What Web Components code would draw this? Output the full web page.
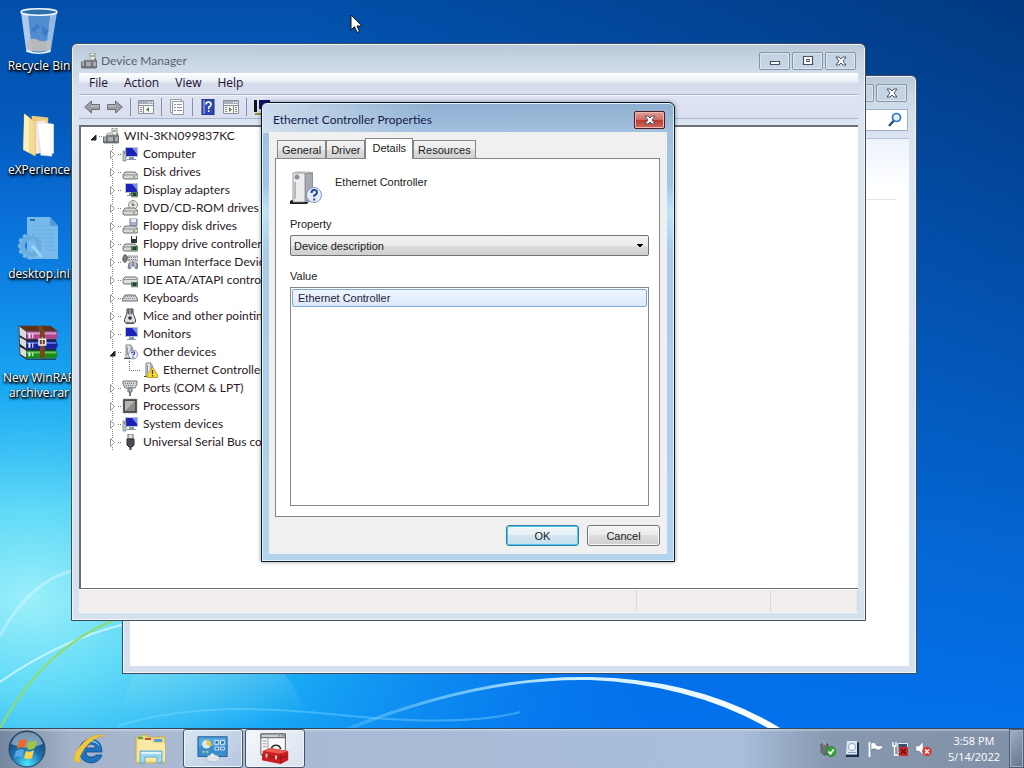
<!DOCTYPE html>
<html lang="en">
<head>
<meta charset="utf-8">
<title>Device Manager</title>
<style>
  html, body {
    height: 100%;
    margin: 0;
  }

  body {
    overflow: hidden;
    font: 12px/16px "Open Sans", "Noto Sans", sans-serif;
    color: #1a1420;
    background: #0a6be0;
  }
</style>
</head>
<body>
<desktop-shell></desktop-shell>

<script>
const MONITOR = `
  <path d="M3 1h13v10H3z" fill="#b9c4d2"/><path d="M4 2h11v8H4z" fill="#1a22b8"/>
  <path d="M10 2h5v6z" fill="#7d8cf0"/><path d="M7 11h5v2h2v1H5v-1h2z" fill="#8b97a5"/>`;
const DRIVE = `
  <path d="M3 8h10l3 3v3l-1 1H2l-1-1v-3z" fill="#d7d9d7" stroke="#6e7270"/>
  <path d="M1.500 11h14" stroke="#8b8f8d"/><path d="M11 13h2" stroke="#3a8a46"/>`;
const CHIP = `
  <path d="M9 10h7v5H9z" fill="#4d7d5c"/><path d="M11 11h3v3h-3z" fill="#23402d"/>
  <path d="M9 15h7" stroke="#9fb8a5"/>`;
const TOWER = `
  <path d="M4 1h5v13H4z" fill="#e4e6e8" stroke="#7d8288"/><path d="M9 2l2 1v11H9z" fill="#9ca2a8"/>
  <path d="M2 14h10v1H2z" fill="#44484c"/><path d="M5.500 3v8" stroke="#8d9298"/>`;
const PC = `
  <path d="M5 5h9l2 4v5l-1 1H1l-1-1V9h3z" fill="#7b8084" stroke="#4a4e52" stroke-width=".7"/>
  <path d="M9 0h5v7H9z" fill="#eef2ea" stroke="#777" stroke-width=".8"/><path d="M10 2h3v2h-3z" fill="#8fb28c"/>
  <path d="M2 7l3-3h4v3z" fill="#c6c9cb"/><path d="M1 10h14M1 12h14" stroke="#d6d8da"/>
  <path d="M4 9v5M11 9v5" stroke="#3d4144"/>`;
const PANE = `
  <path d="M.500 1.500h15v13H.500z" fill="#f4f6f4" stroke="#8b9099"/><path d="M1 2h14v3H1z" fill="#a9afb9"/>
  <path d="M10 3.500h1m1 0h1m1 0h1" stroke="#fff"/><path d="M.500 6.500h15" stroke="#8b9099"/>`;

// viewBox and markup of every glyph
const ICONS = {
  pc: ['0 0 16 16', PC],
  computer: ['0 0 16 16', MONITOR + '<path d="M1 5h3v10H1z" fill="#c5cad0" stroke="#6f767e" stroke-width=".7"/><path d="M2 7h1" stroke="#444"/>'],
  disk: ['0 0 16 16', DRIVE],
  display: ['0 0 16 16', MONITOR + CHIP],
  dvd: ['0 0 16 16', '<circle cx="11" cy="5" r="4.500" fill="#e8e9e6" stroke="#8d8f8a"/><path d="M11 1l1 3 3 1-4 1-3-2z" fill="#b9c2a5"/><circle cx="11" cy="5" r="1.300" fill="#777"/>' + DRIVE],
  floppy: ['0 0 16 16', '<path d="M8 1h7v7H8z" fill="#a9b2c6" stroke="#7a83a0"/><path d="M9 1h5v3H9z" fill="#e9edf4"/>' + DRIVE],
  floppyctl: ['0 0 16 16', '<path d="M9 0h6v7H9z" fill="#33363a"/><path d="M10 0h4v3h-4z" fill="#f0f0f0"/>' + DRIVE + CHIP],
  hid: ['0 0 16 16', '<path d="M6 2h10v5H6z" fill="#d8dade" stroke="#888" stroke-width=".8"/><path d="M7 3.500h8M7 5.500h8" stroke="#888" stroke-dasharray="1 1"/><path d="M2 1c3-1 4 2 3 5s-3 3-4 1 0-4 1-6z" fill="#77797c" stroke="#444" stroke-width=".6"/><path d="M7 9q4-2 8 0l1 5-2 1-2-3H10l-2 3-2-1z" fill="#8a94a5" stroke="#59616e" stroke-width=".7"/><path d="M9 8v5M13 8v5" stroke="#e4e7ec"/>'],
  ide: ['0 0 16 16', '<path d="M3 5h11l2 2v4l-1 1H2l-1-1V7z" fill="#dddfdd" stroke="#6e7270"/><path d="M1.500 7.500h14" stroke="#999"/>' + CHIP],
  keyboard: ['0 0 16 16', '<path d="M3 5h10l3 5v1H0v-1z" fill="#d3d5d8" stroke="#66696d"/><path d="M3 6.500h10M2 8.500h12" stroke="#8b8e92" stroke-dasharray="1 1"/>'],
  mouse: ['0 0 16 16', '<path d="M5 1h6v3q0 2 1.500 5t1 5l-2 1.500h-7L2.500 14q-.500-2 1-5T5 4z" fill="#dfe0e1" stroke="#3f4143"/><path d="M5.500 1.500v4l2 1.500v-6zM10.500 1.500v4l-2 1.500v-6z" fill="#5a5c5e"/><circle cx="8" cy="10" r="1.800" fill="#2f3133"/><path d="M4 14q4 2 8 0" stroke="#6a6c6e" fill="none"/>'],
  monitor: ['0 0 16 16', MONITOR],
  other: ['0 0 16 16', TOWER + '<circle cx="11" cy="10.500" r="4.500" fill="#eef2fb" stroke="#7f8db0"/><path d="M9.500 9.500q0-1.700 1.600-1.700t1.500 1.500q0 1-1.500 1.700v.6M11 12.500v1.200" fill="none" stroke="#2c4190" stroke-width="1.200"/>'],
  warning: ['0 0 16 16', TOWER + '<path d="M10.500 5l5.500 8.500v2H5v-2z" fill="#f7dc2c" stroke="#a8931c" stroke-width=".8"/><path d="M10.500 8v4M10.500 13v1.500" stroke="#4a4000" stroke-width="1.300"/>'],
  port: ['0 0 16 16', '<path d="M1 1h14v3l-2 4H3L1 4z" fill="#cfd1d2" stroke="#76797b"/><path d="M3 3.500h10M4 5.500h8" stroke="#76797b" stroke-dasharray="1 1"/><path d="M6 8h4v4H6z" fill="#a9acae" stroke="#76797b"/><path d="M8 12v4" stroke="#76797b" stroke-width="2"/>'],
  cpu: ['0 0 16 16', '<path d="M1 1h14v14H1z" fill="#4c4e4c" stroke="#8d8f8d" stroke-dasharray="1 1"/><path d="M3 3h10v10H3z" fill="#8b8d8b"/><path d="M3 3h10L3 13z" fill="#b4b6b4"/>'],
  usb: ['0 0 16 16', '<path d="M6 0h5v5H6z" fill="#e2e3e4" stroke="#66696b"/><path d="M5 5h7v6l-2 2H7l-2-2z" fill="#4a4c4e" stroke="#2d2f31"/><path d="M8.500 13v3" stroke="#444" stroke-width="2"/>'],

  back: ['0 0 16 16', '<path d="M.700 8l6.800-6v3.500h8v5h-8V14z" fill="#9c9ea3" stroke="#6c6e75"/><path d="M7 7h8" stroke="#c9cbd0"/>'],
  forward: ['0 0 16 16', '<path d="M15.300 8L8.500 2v3.500h-8v5h8V14z" fill="#9c9ea3" stroke="#6c6e75"/><path d="M1 7h8" stroke="#c9cbd0"/>'],
  hidetree: ['0 0 16 16', PANE + '<path d="M5.500 7v7" stroke="#8b9099"/><path d="M2 8.500h2M2 10.500h2M2 12.500h2" stroke="#888"/><path d="M11 8v5L8 10.500z" fill="#4d8b52"/>'],
  props: ['0 0 16 16', '<path d="M1.500.500h11v13h-11z" fill="#f2f3f5" stroke="#989ca6"/><path d="M3.500 2.500h11v13h-11z" fill="#fafafa" stroke="#989ca6"/><path d="M5 5.500h2m1 0h5M5 8.500h2m1 0h5M5 11.500h2m1 0h5" stroke="#8d93a5"/>'],
  help: ['0 0 16 16', '<path d="M2 0h12v16H2z" fill="#2f49ad" stroke="#1d2f7d"/><path d="M3 1h2v14H3z" fill="#6c85d8"/><path d="M6 5.500q0-2.500 2.500-2.500T11 5.500q0 1.500-2.300 2.800V10M8.700 11.300V13" fill="none" stroke="#fff" stroke-width="1.600"/>'],
  showpane: ['0 0 16 16', PANE + '<path d="M10.500 7v7" stroke="#8b9099"/><path d="M2 8.500h2M12 8.500h2M12 10.500h2M2 10.500h2M12 12.500h2M2 12.500h2" stroke="#888"/><path d="M6 8v5l3-2.500z" fill="#4d8b52"/>'],
  scan: ['0 0 16 16', '<path d="M0 1h3v12H0z" fill="#111"/><path d="M5 1h11v9H5z" fill="#10106e"/><path d="M1 14h9v2H1z" fill="#8e8c3a"/>'],

  device: ['0 0 32 34', `
    <path d="M0 31l4-2h17l-4 5H0z" fill="#1c1e20"/><path d="M3 3l4-2h12l4 2v27l-6 2H3z" fill="#d9dbde"/>
    <path d="M3 3h12v29H3z" fill="#ecedee" stroke="#85898e" stroke-width=".8"/><path d="M15 3l8-1v28l-8 2z" fill="#8f9399"/>
    <path d="M17 4v26M19 4v26M21 4v25" stroke="#bfc3c8"/><circle cx="7" cy="7" r="2.500" fill="#8d9196"/><path d="M5 12v17" stroke="#b6babe" stroke-width="2"/>
    <circle cx="24" cy="25" r="7.500" fill="#e4ecfa" stroke="#8596b8"/>
    <path d="M21.500 23q0-3 2.800-3t2.700 2.600q0 1.700-2.800 2.900v1.300M24.200 28.500v2" fill="none" stroke="#2746a0" stroke-width="2"/>`],

  recycle: ['0 0 38 46', `
    <path d="M1 4l5 37q13 7 25 0L37 4z" fill="#86b4e4" opacity=".6"/>
    <path d="M1 4l5 37q3 2 6 2.500L8 6z" fill="#e8f4ff" opacity=".6"/><path d="M30 8l-4 35 5-2 6-37z" fill="#d5e8fb" opacity=".5"/>
    <path d="M7 33q6-4 11-1t13-1l-1 10q-11 5-23 0z" fill="#c5beb8" opacity=".85"/>
    <path d="M6 41q13 7 25 0l-.500 3q-12 4-24 0z" fill="#e9f0f7"/>
    <path d="M11 22l6-7 4 6-4-1-2 5zM22 18l7 4-4 7-3-5z" fill="#2f6fc4" opacity=".6"/>
    <ellipse cx="19" cy="4" rx="18" ry="3.200" fill="#2f6fae" stroke="#eef6ff" stroke-width="1.500"/>`],
  folder: ['0 0 38 50', `
    <path d="M11 4l18 2v36L13 46z" fill="#e9cd7c"/><path d="M12 11l14-2v35l-14 2z" fill="#f7e9e0"/>
    <path d="M17 12l16 1v35l-12-1z" fill="#fdfdfd" stroke="#cfd3da" stroke-width=".6"/>
    <path d="M21 12l14 1v32H22z" fill="#fff"/><path d="M3 2l12 9v37L2 41z" fill="#f3dd93" stroke="#cda84c" stroke-width=".6"/><path d="M3 2l5 4v38l-6-3z" fill="#fbf0bd"/>`],
  ini: ['0 0 42 46', `
    <path d="M9 1h23l8 9v33H9z" fill="#8cc6f0" opacity=".85"/><path d="M32 1v9h8z" fill="#4f9bd8"/>
    <path d="M12 4h5" stroke="#2b6cae" stroke-width="2"/><path d="M13 10h18M13 14h23M13 18h23M19 22h17M24 26h12M27 30h9M28 34h8" stroke="#68aee0"/>
    <circle cx="13" cy="30" r="9" fill="none" stroke="#6aaee0" stroke-width="6"/><circle cx="13" cy="30" r="12" fill="none" stroke="#7cbae6" stroke-width="3" stroke-dasharray="3 3"/>
    <path d="M14 30q6 5 9 11" stroke="#9fd2f5" stroke-width="3" fill="none"/>`],
  rar: ['0 0 44 38', `
    <path d="M1 1l8 6v28l-7-4z" fill="#dcdcdc" stroke="#444"/><path d="M1 1h33l8 6H9z" fill="#5d3218"/><path d="M9 7h31q3 4 0 8H9z" fill="#b2458e"/><path d="M9 8h31v2H9z" fill="#e0a0cc"/>
    <path d="M2 11l7 4h31v2H9l-7-4zM2 20l7 5h31v2H9l-7-4z" fill="#222"/><path d="M9 17h31q3 4 0 8H9z" fill="#16229c"/><path d="M9 18h31v2H9z" fill="#5a6ee0"/>
    <path d="M9 27h31q3 4 0 8H9z" fill="#1d8a1c"/><path d="M9 28h31v2H9z" fill="#62c852"/><path d="M2 31l7 5h31" fill="none" stroke="#222"/>
    <path d="M11 9h2v5h-2zm4 0h1v5h-1zM11 19h2v5h-2zm4 0h1v5h-1zM11 29h2v4h-2zm4 0h1v4h-1z" fill="#fff"/>
    <path d="M20 1h5l3 6v28h-5V8z" fill="#7a4422"/><path d="M22 15h7v6h-7z" fill="none" stroke="#eee" stroke-width="1.600"/><path d="M25.500 13v9" stroke="#ddd"/>`],

  start: ['0 0 38 38', `
    <defs><radialGradient id="orb" cx=".5" cy=".9" r=".9"><stop offset="0" stop-color="#4fe4ff"/><stop offset=".45" stop-color="#1c74b0"/><stop offset="1" stop-color="#12365f"/></radialGradient></defs>
    <circle cx="19" cy="19" r="18" fill="url(#orb)" stroke="#27405e"/><path d="M3 14Q7 2 19 2t16 12q-16 7-32 0z" fill="#dfeaf5" opacity=".5"/>
    <path d="M11 11q4-3 8-1l-2 8q-4-2-8 1z" fill="#ee6a2c"/><path d="M21 11q4 2 8-1l-2 8q-4 3-8 1z" fill="#9cc93c"/>
    <path d="M8 21q4-3 8-1l-2 7q-4-2-8 1z" fill="#58a8e8"/><path d="M18 21q4 2 8-1l-2 8q-4 2-8 0z" fill="#fbd24a"/>`],
  ie: ['0 0 32 32', `
    <path d="M29 19H13q0 5 5 5 4 0 5-2h6q-3 8-11 8Q7 29 6 18 7 7 18 6q11 1 11 13zM13 15h10q-1-4-5-4t-5 4z" fill="#1f72bd" stroke="#0f4c8c" stroke-width=".8"/>
    <path d="M8 14Q12 7 18 7q7 1 9 7-4-5-9-5-6 0-10 5z" fill="#7cc8f4"/>
    <path d="M30 4Q26 2 19 8 10 15 7 24q-1 4 1 5-7 2-7-4 1-7 9-15T26 2q5-1 4 2z" fill="#f2c53c" stroke="#cf9a1f" stroke-width=".4"/>`],
  explorer: ['0 0 32 32', `
    <path d="M1 4h5l1-2h5l1 2h17v26H1z" fill="#eed57e" stroke="#c9a640" stroke-width=".7"/><path d="M3 4h5v2H3z" fill="#58a83d"/><path d="M10 5h6v3h-6z" fill="#c84c32"/><path d="M19 6h8v3h-8z" fill="#5aa0d8"/>
    <path d="M3 7h13l2 3h12v18H2z" fill="#fae9a4"/><path d="M5 18h22v12h-5v-6H10v6H5z" fill="#9cd8f3" stroke="#4b9cc8" stroke-width=".8"/><path d="M6 19h20v2H6z" fill="#dff4fd"/>`],
  cpanel: ['0 0 34 30', `
    <path d="M1 2h31v21H1z" fill="#3b8ccb" stroke="#1c5c96"/><path d="M2 3h29v9H2z" fill="#5aa7df"/>
    <circle cx="10" cy="10" r="4.500" fill="#dbe9f5"/><path d="M10 10V5a5 5 0 0 1 4 8z" fill="#f2c33c"/>
    <path d="M19 6h4v4h-4zM25 6h4v4h-4zM19 13h4v3h-4zM25 13h4v3h-4z" fill="#2a72b0" stroke="#e8f3fb"/>
    <path d="M6 18h2m2 0h2" stroke="#bfe28a" stroke-width="2"/><ellipse cx="17" cy="25" rx="7" ry="4" fill="#dfe3e8" stroke="#9aa2ac" stroke-width=".6"/><path d="M16 19l4 4h-7z" fill="#e9edf2"/>`],
  toolbox: ['0 0 32 34', `
    <path d="M1 1h26v22H1z" fill="#fafafa" stroke="#55585c"/><path d="M1 1h26v4H1z" fill="#c8ccd2" stroke="#55585c"/><path d="M20 3h1m2 0h1m1 0h1" stroke="#333"/>
    <path d="M3 8.500h4M3 11.500h4M3 14.500h4" stroke="#8590a0"/><path d="M8.500 5v15" stroke="#999"/>
    <path d="M12 17q1-4 5-4t5 4" fill="none" stroke="#39322f" stroke-width="1.800"/>
    <path d="M3 19l8-3 19 3v10l-8 4-20-4z" fill="#c81e22"/><path d="M3 19l8-3 19 3-8 3z" fill="#ec5a56"/><path d="M2 24l20 3 8-3" fill="none" stroke="#8d0f14"/><path d="M22 22v11" stroke="#9c1318"/><path d="M6 22h2v4H6zM16 24h2v4h-2z" fill="#f0d6c8"/>`],

  safe: ['0 0 16 16', '<path d="M1 3h7v8l-2 3H4L1 11z" fill="#6d7378" stroke="#44494e" stroke-width=".7"/><path d="M3 0h3v4H3z" fill="#9da3a8"/><circle cx="11" cy="10.500" r="5" fill="#37a336" stroke="#1d6f1d" stroke-width=".6"/><path d="M8.500 10.500l2 2.300 3.300-4.500" fill="none" stroke="#fff" stroke-width="1.700"/>'],
  disc: ['0 0 16 16', '<path d="M3 0h10v13H2z" fill="#dbe6f1"/><path d="M13 1l2 1v14H2v-2h11z" fill="#1d2c4c"/><circle cx="8" cy="6" r="3.600" fill="#f2f7fb" stroke="#8fa6bd"/><path d="M4 11.500h8" stroke="#90a2b4"/>'],
  flag: ['0 0 16 16', '<path d="M1.500 1v15" stroke="#fff" stroke-width="1.800"/><path d="M3 2q3-1 5 .5V4q3 1.500 7 .5-1 5-7 4.500V8Q5 7 3 9z" fill="#fff" stroke="#40505f" stroke-width=".4"/>'],
  network: ['0 0 16 16', '<path d="M1 1v4h3V1M2.500 5v9H6" fill="none" stroke="#fff" stroke-width="1.300"/><path d="M6 2.500h9.500v9H6z" fill="#39506e" stroke="#e6edf4"/><path d="M6 14.500h7" stroke="#e6edf4"/><path d="M7 6h9v9H7z" fill="#c92a2c"/><path d="M9 8l5 5M14 8l-5 5" stroke="#5e1012" stroke-width="1.500"/>'],
  volume: ['0 0 16 16', '<path d="M0 5h3l4-4v13l-4-4H0z" fill="#fff" stroke="#5b6b7a" stroke-width=".4"/><circle cx="11" cy="10.500" r="4.700" fill="#d83a34"/><path d="M9 8.500l4 4M13 8.500l-4 4" stroke="#fff" stroke-width="1.500"/>'],

  min: ['0 0 12 12', '<path d="M1.500 6.500h9v3h-9z" fill="#fff" stroke="#46536a" stroke-width="1.200"/>'],
  max: ['0 0 12 12', '<path d="M1.500 1.500h9v8h-9z" fill="#fff" stroke="#46536a" stroke-width="1.200"/><path d="M4.500 4.500h3v2h-3z" fill="none" stroke="#46536a"/>'],
  close: ['0 0 12 12', '<path d="M1 2h3l2 2 2-2h3L8 6l3 4H8L6 8l-2 2H1l3-4z" fill="#fff" stroke="#46536a"/>'],
  search: ['0 0 16 16', '<circle cx="9.500" cy="5.500" r="4" fill="#e4f1fb" stroke="#2b74c4" stroke-width="1.700"/><path d="M6.500 9L2 14" stroke="#244a80" stroke-width="2.200"/>'],
  cursor: ['0 0 13 20', '<path d="M1 1v15l3.500-3.300L7 18.500l2.500-1L7 12h5z" fill="#fff" stroke="#111"/>']
};

class UiIcon extends HTMLElement {
  static get observedAttributes() {
    return ['name'];
  }

  constructor() {
    super();
    this.attachShadow({ mode: 'open' });
  }

  attributeChangedCallback(name, oldValue, newValue) {
    const [box, markup] = ICONS[newValue];
    this.shadowRoot.innerHTML = `
      <style>
        :host { display: block; flex: none; width: 16px; height: 16px; }
        svg { display: block; width: 100%; height: 100%; }
      </style>
      <svg viewBox="${box}" aria-hidden="true">${markup}</svg>
    `;
  }
}

class DesktopWallpaper extends HTMLElement {
  constructor() {
    super();
    this.attachShadow({ mode: 'open' });
    this.shadowRoot.innerHTML = `
      <style>
        :host { display: block; }
        svg { display: block; width: 100%; height: 100%; }
      </style>
      <svg viewBox="0 0 1024 728" preserveAspectRatio="none" aria-hidden="true">
        <defs>
          <linearGradient id="base" x1="0" y1="0" x2="0" y2="1">
            <stop offset="0" stop-color="#0350aa"/><stop offset=".3" stop-color="#0561cb"/>
            <stop offset=".75" stop-color="#0672e8"/><stop offset="1" stop-color="#0474f0"/>
          </linearGradient>
          <linearGradient id="shade" x1="0" y1="0" x2="1" y2="0">
            <stop offset=".3" stop-color="#00265f" stop-opacity="0"/><stop offset="1" stop-color="#00265f" stop-opacity=".55"/>
          </linearGradient>
          <linearGradient id="fade" x1="0" y1="0" x2="0" y2="1">
            <stop offset="0" stop-color="#fff"/><stop offset=".7" stop-color="#555"/><stop offset="1" stop-color="#111"/>
          </linearGradient>
          <mask id="top"><rect width="1024" height="728" fill="url(#fade)"/></mask>
          <radialGradient id="glow" gradientUnits="userSpaceOnUse" cx="0" cy="0" r="1" gradientTransform="translate(30 600) scale(640 480)">
            <stop offset="0" stop-color="#9ceffa"/><stop offset=".18" stop-color="#62dbf7"/>
            <stop offset=".45" stop-color="#1cb2f6" stop-opacity=".85"/><stop offset="1" stop-color="#0a80f0" stop-opacity="0"/>
          </radialGradient>
          <linearGradient id="arc" x1="0" y1="0" x2="1" y2="0">
            <stop offset="0" stop-color="#8fdcff" stop-opacity=".2"/><stop offset=".5" stop-color="#c9efff"/><stop offset="1" stop-color="#fff"/>
          </linearGradient>
          <radialGradient id="bubble" cx=".5" cy="0" r="1">
            <stop offset="0" stop-color="#d5f7e8" stop-opacity=".4"/><stop offset="1" stop-color="#d5f7e8" stop-opacity="0"/>
          </radialGradient>
        </defs>
        <rect width="1024" height="728" fill="url(#base)"/>
        <rect width="1024" height="728" fill="url(#shade)" mask="url(#top)"/>
        <rect width="1024" height="728" fill="url(#glow)"/>
        <path d="M115 728Q150 600 210 620 290 650 310 728z" fill="url(#bubble)"/>
        <g fill="none">
          <path d="M0 636Q30 580 75 570" stroke="#e3fbff" stroke-width="3" opacity=".4"/>
          <path d="M0 682Q60 640 125 624" stroke="#e3fbff" stroke-width="2" opacity=".7"/>
          <path d="M0 728Q45 645 120 618" stroke="#8fdc6c" stroke-width="2"/>
          <path d="M118 726Q200 700 330 714T520 712" stroke="#7fdcff" stroke-width="2" opacity=".4"/>
        </g>
        <path d="M345 728Q480 675 590 677 700 679 780 728h-12Q690 684 590 680 480 678 355 728z" fill="url(#arc)"/>
      </svg>
    `;
  }
}

class DesktopIcon extends HTMLElement {
  constructor() {
    super();
    this.attachShadow({ mode: 'open' });
    this.shadowRoot.innerHTML = `
      <style>
        :host { display: block; height: 104px; }
        button {
          display: flex;
          flex-direction: column;
          align-items: center;
          gap: 4px;
          width: 100%;
          padding: 0;
          border: 0;
          background: none;
          font: 12px/15px "Open Sans", "Noto Sans", sans-serif;
          color: #fff;
          text-shadow: 0 1px 2px #000, 1px 1px 2px #000, 1px 2px 3px #000;
        }
        ui-icon { width: 42px; height: 46px; }
      </style>
      <button type="button"><ui-icon></ui-icon><span><slot></slot></span></button>
    `;
  }

  connectedCallback() {
    this.shadowRoot.querySelector('ui-icon').setAttribute('name', this.getAttribute('icon'));
  }
}

class AeroWindow extends HTMLElement {
  constructor() {
    super();
    this.attachShadow({ mode: 'open' });
    this.shadowRoot.innerHTML = `
      <style>
        :host {
          display: flex;
          flex-direction: column;
          box-sizing: border-box;
          padding: 0 7px 7px;
          border: 1px solid #3f4a5c;
          border-radius: 6px 6px 0 0;
          background: linear-gradient(#b9c7d6, #cbd8e6 20px, #dbe5f1 60px, #d6e1ee);
          box-shadow: inset 0 0 0 1px #eef4fa;
        }
        :host([active]) {
          border-color: #0c1a26;
          background: linear-gradient(100deg, #ffffff88, #ffffff00 40%) 0 0 / 100% 30px no-repeat,
            linear-gradient(#8fafd0, #a3c1e0 30px, #a0c6e6 80px, #bfe4f8 110px, #a9cbe6 150px, #b3d4ec);
          box-shadow: inset 0 0 0 1px #e0f2fc, 0 0 4px #0006;
        }
        header {
          display: flex;
          align-items: center;
          gap: 4px;
          height: 24px;
          padding: 5px 2px 0;
          color: #5a6472;
          font-family: Lato, "Open Sans", sans-serif;
        }
        :host([active]) header { padding-left: 4px; color: #14204c; }
        h1 { flex: 1; margin: 0; font: inherit; }
        .controls { display: flex; gap: 2px; }
        .controls button {
          display: flex;
          align-items: center;
          justify-content: center;
          width: 31px;
          height: 18px;
          padding: 0;
          border: 1px solid #8594a9;
          border-radius: 2px;
          background: #c6d3e2;
          box-shadow: inset 0 0 0 1px #dde7f1;
        }
        .controls ui-icon { width: 12px; height: 12px; }
        :host([active]) .controls button {
          border-color: #4b1c22;
          background: linear-gradient(#e2a39b, #cf6a5e 50%, #b93a2e 50%, #d0685a);
          box-shadow: inset 0 0 0 1px #eeb9b2;
        }
        main { display: flex; flex: 1; flex-direction: column; min-height: 0; }
      </style>
      <header>
        <slot name="icon"></slot>
        <h1></h1>
        <div class="controls"></div>
      </header>
      <main><slot></slot></main>
    `;
  }

  connectedCallback() {
    this.shadowRoot.querySelector('h1').textContent = this.getAttribute('heading');
    const labels = { min: 'Minimize', max: 'Maximize', close: 'Close' };
    this.shadowRoot.querySelector('.controls').innerHTML = this.getAttribute('controls').split(' ')
      .map((name) => `<button type="button" aria-label="${labels[name]}"><ui-icon name="${name}"></ui-icon></button>`)
      .join('');
  }
}

class MenuBar extends HTMLElement {
  constructor() {
    super();
    this.attachShadow({ mode: 'open' });
    this.shadowRoot.innerHTML = `
      <style>
        :host {
          display: flex;
          padding: 0 2px;
          border-bottom: 1px solid #aab4ca;
          background: linear-gradient(#fff, #e9edf7 9px, #d4daea 10px, #d9e0ee);
        }
        button {
          padding: 2px 8px 3px;
          border: 0;
          background: none;
          font: inherit;
          color: #1d1030;
        }
      </style>
      <button type="button">File</button>
      <button type="button">Action</button>
      <button type="button">View</button>
      <button type="button">Help</button>
    `;
  }
}

class ToolBar extends HTMLElement {
  constructor() {
    super();
    this.attachShadow({ mode: 'open' });
    const items = [
      ['back', 'Back'], ['forward', 'Forward'], null,
      ['hidetree', 'Show/Hide Console Tree'], null,
      ['props', 'Properties'], null,
      ['help', 'Help'], ['showpane', 'Show/Hide Action Pane'], null,
      ['scan', 'Scan for hardware changes']
    ];
    this.shadowRoot.innerHTML = `
      <style>
        :host {
          display: flex;
          align-items: center;
          gap: 7px;
          height: 22px;
          padding: 0 5px;
          border-top: 1px solid #f6f8fc;
          border-bottom: 1px solid #a8b6d0;
          background: linear-gradient(#dfe4f3, #d9def0);
        }
        button { padding: 0; border: 0; background: none; }
        hr { width: 1px; height: 18px; margin: 0; border: 0; background: #8490a8; }
      </style>
      ${items.map((item) => item
        ? `<button type="button" aria-label="${item[1]}"><ui-icon name="${item[0]}"></ui-icon></button>`
        : '<hr>').join('')}
    `;
  }
}

class TreeRow extends HTMLElement {
  constructor() {
    super();
    this.attachShadow({ mode: 'open' });
    this.shadowRoot.innerHTML = `
      <style>
        :host {
          display: flex;
          align-items: center;
          height: 18px;
          padding-left: 27px;
          white-space: nowrap;
        }
        :host([level="0"]) { padding-left: 8px; }
        :host([level="2"]) { padding-left: 45px; }
        button {
          display: flex;
          width: 9px;
          padding: 0;
          border: 0;
          background: #fff;
        }
        svg { display: block; width: 9px; height: 9px; }
        .open, :host([open]) .closed { display: none; }
        :host([open]) .open { display: block; }
        i { width: 3px; margin: 0 1px; border-top: 1px dotted #777; }
        :host([level="2"]) button { display: none; }
        :host([level="2"]) i { width: 10px; height: 9px; margin: 0 2px 9px 3px; border: 1px dotted #777; border-width: 0 0 1px 1px; }
        span { padding: 0 0 1px 5px; }
      </style>
      <button type="button" aria-label="Toggle">
        <svg class="closed" viewBox="0 0 9 9"><path d="M2.500.500v8l4-4z" fill="#fff" stroke="#9a9a9a"/></svg>
        <svg class="open" viewBox="0 0 9 9"><path d="M7 3v5H2z" fill="#262626" stroke="#262626"/></svg>
      </button>
      <i></i>
      <ui-icon></ui-icon>
      <span><slot></slot></span>
    `;
  }

  connectedCallback() {
    this.shadowRoot.querySelector('ui-icon').setAttribute('name', this.getAttribute('icon'));
  }
}

class DeviceTree extends HTMLElement {
  constructor() {
    super();
    this.attachShadow({ mode: 'open' });
    const devices = [
      [0, 'pc', 'WIN-3KN099837KC', true],
      [1, 'computer', 'Computer'],
      [1, 'disk', 'Disk drives'],
      [1, 'display', 'Display adapters'],
      [1, 'dvd', 'DVD/CD-ROM drives'],
      [1, 'floppy', 'Floppy disk drives'],
      [1, 'floppyctl', 'Floppy drive controllers'],
      [1, 'hid', 'Human Interface Devices'],
      [1, 'ide', 'IDE ATA/ATAPI controllers'],
      [1, 'keyboard', 'Keyboards'],
      [1, 'mouse', 'Mice and other pointing devices'],
      [1, 'monitor', 'Monitors'],
      [1, 'other', 'Other devices', true],
      [2, 'warning', 'Ethernet Controller'],
      [1, 'port', 'Ports (COM &amp; LPT)'],
      [1, 'cpu', 'Processors'],
      [1, 'computer', 'System devices'],
      [1, 'usb', 'Universal Serial Bus controllers']
    ];
    this.shadowRoot.innerHTML = `
      <style>
        :host {
          display: block;
          flex: 1;
          min-height: 0;
          margin-top: 6px;
          overflow: hidden;
          border: solid #6c6f76;
          border-width: 2px 0 1px 2px;
          background: #fff;
          color: #2b1828;
          font-family: Lato, "Open Sans", sans-serif;
        }
        .children {
          background: repeating-linear-gradient(#888 0 1px, #fff 1px 2px) 31px 0 / 1px 100% no-repeat;
        }
      </style>
      <div role="tree">
        ${this.row(devices[0])}
        <div class="children" role="group">${devices.slice(1).map(this.row).join('')}</div>
      </div>
    `;
  }

  row([level, icon, label, open]) {
    return `<tree-row role="treeitem" level="${level}" icon="${icon}"${open ? ' open' : ''}>${label}</tree-row>`;
  }
}

class StatusBar extends HTMLElement {
  constructor() {
    super();
    this.attachShadow({ mode: 'open' });
    this.shadowRoot.innerHTML = `
      <style>
        :host { display: flex; height: 22px; border-top: 1px solid #fff; border-bottom: 1px solid #fafafa; background: #f1eded; }
        div { flex: 133; border-right: 1px solid #dcd8d8; }
        div:first-of-type { flex: 558; }
        div:last-of-type { flex: 86; }
      </style>
      <div></div><div></div><div></div>
    `;
  }
}

class ExplorerView extends HTMLElement {
  constructor() {
    super();
    this.attachShadow({ mode: 'open' });
    this.shadowRoot.innerHTML = `
      <style>
        :host { display: flex; flex: 1; flex-direction: column; }
        .search {
          display: flex;
          align-items: center;
          align-self: flex-end;
          width: 200px;
          height: 20px;
          margin: 4px 1px 7px;
          padding-right: 4px;
          border: 1px solid #9fb0c6;
          background: #fff;
        }
        input { flex: 1; min-width: 0; border: 0; background: none; }
        .view { flex: 1; border-top: 1px solid #b5c4d6; background: linear-gradient(#edf3fc, #fff 50px); }
        hr { margin: 60px 13px 0; border: 0; border-top: 1px solid #e4e6ea; }
      </style>
      <label class="search"><input type="search" aria-label="Search"><ui-icon name="search"></ui-icon></label>
      <div class="view"><hr></div>
    `;
  }
}

class DeviceProperties extends HTMLElement {
  constructor() {
    super();
    this.attachShadow({ mode: 'open' });
    this.shadowRoot.innerHTML = `
      <style>
        :host {
          display: flex;
          flex: 1;
          flex-direction: column;
          padding: 6px 7px 8px 6px;
          background: #f0f0f0;
          font: 11px/14px "Liberation Sans", Arial, sans-serif;
          color: #222;
        }
        button, select { font: inherit; color: inherit; }
        nav { display: flex; align-items: flex-end; padding-left: 2px; }
        nav button {
          height: 18px;
          padding: 0 4px;
          border: 1px solid #84868a;
          border-bottom: 0;
          background: linear-gradient(#f2f2f2, #ebebeb 50%, #dddddd 50%, #d2d2d2);
        }
        nav button[aria-selected="true"] {
          z-index: 1;
          height: 21px;
          margin-bottom: -1px;
          padding: 0 6px 2px;
          background: #fff;
        }
        .panel {
          display: flex;
          flex: 1;
          flex-direction: column;
          gap: 4px;
          padding: 11px 10px 10px 14px;
          border: 1px solid #84868a;
          background: #fff;
        }
        .device { display: flex; gap: 13px; margin-bottom: 9px; }
        .device ui-icon { width: 32px; height: 34px; }
        .device span { padding-top: 5px; }
        select {
          appearance: none;
          height: 21px;
          margin-bottom: 9px;
          padding: 0 3px;
          border: 1px solid #6f7173;
          border-radius: 2px;
          background:
            linear-gradient(to bottom right, #000 50%, #0000 50%) right 4px center / 4px 4px no-repeat,
            linear-gradient(to bottom left, #000 50%, #0000 50%) right 8px center / 4px 4px no-repeat,
            linear-gradient(#f2f2f2, #ebebeb 50%, #dcdcdc 50%, #cfcfcf);
        }
        ul { flex: 1; margin: 0; padding: 1px; border: 1px solid #84868a; list-style: none; }
        li {
          padding: 1px 5px;
          border: 1px solid #7fa8d8;
          border-radius: 2px;
          background: linear-gradient(#f0f6fe, #dbe8fb);
          color: #1b2440;
        }
        footer { display: flex; justify-content: flex-end; gap: 8px; padding-top: 8px; }
        footer button {
          width: 73px;
          height: 21px;
          padding: 0;
          border: 1px solid #707275;
          border-radius: 3px;
          background: linear-gradient(#f4f4f4, #ebebeb 50%, #dddddd 50%, #cfcfcf);
          box-shadow: inset 0 0 0 1px #fbfbfb;
        }
        footer .default {
          border-color: #2f7f9e;
          background: linear-gradient(#f1f7fa, #e5f0f6 50%, #d3e5f0 50%, #c6e0ee);
          box-shadow: inset 0 0 0 1px #4cc8ee;
        }
      </style>
      <nav role="tablist">
        <button type="button" role="tab">General</button>
        <button type="button" role="tab">Driver</button>
        <button type="button" role="tab" aria-selected="true">Details</button>
        <button type="button" role="tab">Resources</button>
      </nav>
      <div class="panel" role="tabpanel">
        <div class="device"><ui-icon name="device"></ui-icon><span>Ethernet Controller</span></div>
        <label for="property">Property</label>
        <select id="property"><option>Device description</option></select>
        <span id="value">Value</span>
        <ul role="listbox" aria-labelledby="value"><li role="option" aria-selected="true">Ethernet Controller</li></ul>
      </div>
      <footer>
        <button type="button" class="default">OK</button>
        <button type="button">Cancel</button>
      </footer>
    `;
  }
}

class TaskBar extends HTMLElement {
  constructor() {
    super();
    this.attachShadow({ mode: 'open' });
    this.shadowRoot.innerHTML = `
      <style>
        :host {
          display: flex;
          gap: 2px;
          box-sizing: border-box;
          border-top: 1px solid #33475f;
          background: linear-gradient(#fff6, #fff0 3px),
            linear-gradient(90deg, #74879f, #a5b2c8 70px, #a9bad2 180px, #a8bedb 740px, #8799b0 830px, #8090a6);
        }
        button {
          display: flex;
          align-items: center;
          justify-content: center;
          box-sizing: border-box;
          width: 60px;
          padding: 0;
          border: 0;
          background: none;
        }
        button ui-icon { width: 32px; height: 32px; }
        .start { width: 57px; padding-right: 3px; }
        .start ui-icon { width: 38px; height: 38px; }
        .running {
          border: 1px solid #43536a;
          border-radius: 3px;
          background: linear-gradient(135deg, #dbe6f3, #b4c6de);
          box-shadow: inset 0 0 0 1px #eef4fb;
        }
        .front { background: linear-gradient(135deg, #f6f8fb, #d8e1ee); }
        .tray { display: flex; align-items: center; gap: 8px; margin-left: auto; }
        .tray button { width: 16px; }
        .tray ui-icon { width: 16px; height: 16px; }
        time {
          align-self: center;
          padding: 0 7px 0 14px;
          font-size: 11px;
          text-align: center;
          color: #fff;
        }
        .peek { width: 15px; border: 1px solid #4d5e75; background: linear-gradient(135deg, #9fb0c2, #64748a); box-shadow: inset 0 0 0 1px #a3b1c2; }
      </style>
      <button type="button" class="start" aria-label="Start"><ui-icon name="start"></ui-icon></button>
      <button type="button" aria-label="Internet Explorer"><ui-icon name="ie"></ui-icon></button>
      <button type="button" aria-label="Windows Explorer"><ui-icon name="explorer"></ui-icon></button>
      <button type="button" class="running" aria-label="Control Panel"><ui-icon name="cpanel"></ui-icon></button>
      <button type="button" class="running front" aria-label="Device Manager"><ui-icon name="toolbox"></ui-icon></button>
      <div class="tray">
        <button type="button" aria-label="Safely remove hardware"><ui-icon name="safe"></ui-icon></button>
        <button type="button" aria-label="Disc"><ui-icon name="disc"></ui-icon></button>
        <button type="button" aria-label="Action Center"><ui-icon name="flag"></ui-icon></button>
        <button type="button" aria-label="Network"><ui-icon name="network"></ui-icon></button>
        <button type="button" aria-label="Volume"><ui-icon name="volume"></ui-icon></button>
      </div>
      <time datetime="2022-05-14T15:58">3:58 PM<br>5/14/2022</time>
      <button type="button" class="peek" aria-label="Show desktop"></button>
    `;
  }
}

class DesktopShell extends HTMLElement {
  constructor() {
    super();
    this.attachShadow({ mode: 'open' });
    this.shadowRoot.innerHTML = `
      <style>
        :host { display: flex; flex-direction: column; height: 100%; }
        .desktop { position: relative; flex: 1; min-height: 0; overflow: hidden; }
        desktop-wallpaper { position: absolute; inset: 0; }
        .icons { position: relative; width: 78px; padding-top: 8px; }
        aero-window { position: absolute; }
        .explorer { inset: 75px 107px 54px 122px; }
        .manager { inset: 43px 158px 107px 71px; }
        .properties { inset: 102px 349px 166px 261px; }
        .cursor { position: absolute; left: 350px; top: 14px; width: 13px; height: 20px; }
        task-bar { height: 40px; }
      </style>
      <div class="desktop">
        <desktop-wallpaper></desktop-wallpaper>
        <div class="icons">
          <desktop-icon icon="recycle">Recycle Bin</desktop-icon>
          <desktop-icon icon="folder">eXPerience</desktop-icon>
          <desktop-icon icon="ini">desktop.ini</desktop-icon>
          <desktop-icon icon="rar">New WinRAR archive.rar</desktop-icon>
        </div>
        <aero-window class="explorer" heading="" controls="min max close">
          <explorer-view></explorer-view>
        </aero-window>
        <aero-window class="manager" heading="Device Manager" controls="min max close">
          <ui-icon slot="icon" name="pc"></ui-icon>
          <menu-bar></menu-bar>
          <tool-bar></tool-bar>
          <device-tree></device-tree>
          <status-bar></status-bar>
        </aero-window>
        <aero-window class="properties" heading="Ethernet Controller Properties" controls="close" active>
          <device-properties></device-properties>
        </aero-window>
        <ui-icon class="cursor" name="cursor"></ui-icon>
      </div>
      <task-bar></task-bar>
    `;
  }
}

customElements.define('ui-icon', UiIcon);
customElements.define('desktop-wallpaper', DesktopWallpaper);
customElements.define('desktop-icon', DesktopIcon);
customElements.define('aero-window', AeroWindow);
customElements.define('menu-bar', MenuBar);
customElements.define('tool-bar', ToolBar);
customElements.define('tree-row', TreeRow);
customElements.define('device-tree', DeviceTree);
customElements.define('status-bar', StatusBar);
customElements.define('explorer-view', ExplorerView);
customElements.define('device-properties', DeviceProperties);
customElements.define('task-bar', TaskBar);
customElements.define('desktop-shell', DesktopShell);
</script>
</body>
</html>
